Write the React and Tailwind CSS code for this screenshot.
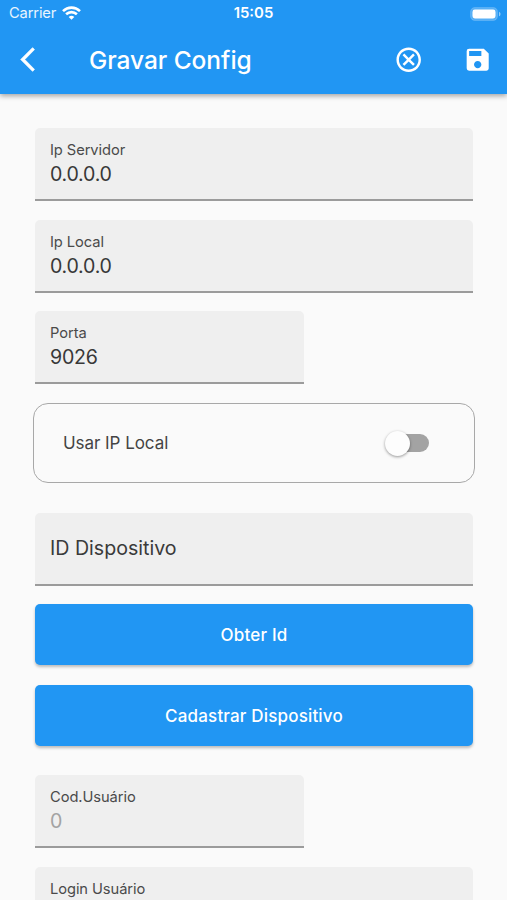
import { MdOutlineCancel, MdSave } from "react-icons/md";

function Label({ children }) {
  return <div className="text-[14.7px] leading-[18px] tracking-[-0.08px] text-[#4a4a4a]">{children}</div>;
}

function Field({ label, value, muted, className = "" }) {
  return (
    <div className={`h-[73px] shrink-0 rounded-t-[5px] border-b-2 border-[#9b9b9b] bg-[#efefef] px-[15px] pt-[13px] ${className}`}>
      <Label>{label}</Label>
      <div className={`mt-[3px] text-[19.6px] leading-6 tracking-[-0.25px] ${muted ? "text-[#a3a3a3]" : "text-[#383838]"}`}>{value}</div>
    </div>
  );
}

function Button({ children, className = "" }) {
  return (
    <button className={`flex h-[61px] w-full shrink-0 items-center justify-center rounded-[5px] bg-[#2196f3] pt-[2px] text-[17px] font-medium tracking-[0.17px] text-white shadow-[0_2px_3px_rgba(0,0,0,0.25)] ${className}`}>
      {children}
    </button>
  );
}

function StatusBar() {
  return (
    <div className="flex h-[27px] items-center pl-[9px] pr-[6px] text-white">
      <div className="flex flex-1 items-center gap-[6px] text-[14.7px] tracking-[-0.15px] text-white/90">
        <span>Carrier</span>
        <svg width="19" height="14" viewBox="0 0 19 14" fill="none" stroke="white" strokeWidth="2.6">
          <path d="M1 5.1C5.9.4 13.1.4 18 5.1" />
          <path d="M4.1 8.3c3.1-2.9 7.7-2.9 10.8 0" />
          <path d="M6.7 10.9c1.7-1.5 3.9-1.5 5.6 0L9.5 13.7z" fill="white" stroke="none" />
        </svg>
      </div>
      <div className="mr-[3px] text-center text-[14.9px] font-semibold">15:05</div>
      <div className="flex flex-1 justify-end">
        <svg width="31" height="14" viewBox="0 0 31 14">
          <rect x="0.5" y="0.5" width="27" height="13" rx="4.2" fill="white" fillOpacity=".25" stroke="white" strokeOpacity=".15" />
          <rect x="2.5" y="2.5" width="23" height="9" rx="2.4" fill="white" />
          <path d="M29 4.7c2 .8 2 3.8 0 4.6z" fill="white" fillOpacity=".5" />
        </svg>
      </div>
    </div>
  );
}

export default function App() {
  return (
    <div className="flex h-[900px] w-[507px] flex-col overflow-hidden bg-[#fafafa] font-['Inter','Liberation_Sans',sans-serif]">
      <header className="z-10 h-[94px] shrink-0 bg-[#2196f3] shadow-[0_2px_5px_rgba(0,0,0,0.35)]">
        <StatusBar />
        <div className="flex h-[65px] items-center pl-[20px] pr-[15px] text-white">
          <svg width="15" height="25" viewBox="-0.4 2 12.3 20" fill="currentColor" stroke="currentColor" strokeWidth="0.6" strokeLinejoin="round">
            <path d="M11.5 3.87 9.9 2.3 0.2 12l9.7 9.7 1.6-1.57L3.54 12z" />
          </svg>
          <h1 className="ml-[54px] pt-px text-[24.5px] font-medium tracking-[-0.05px]">Gravar Config</h1>
          <MdOutlineCancel className="ml-auto size-[29.4px]" />
          <MdSave className="ml-[39px] size-[29.4px]" />
        </div>
      </header>
      <main className="flex flex-col pl-[35px] pr-[34px] pt-[34px]">
        <Field label="Ip Servidor" value="0.0.0.0" />
        <Field label="Ip Local" value="0.0.0.0" className="mt-[19px]" />
        <Field label="Porta" value="9026" className="mt-[18px] w-[269px]" />
        <div className="-mx-[2px] mt-[19px] flex h-[80px] shrink-0 items-center justify-between rounded-[15px] border border-[#a8a8a8] pl-[29px] pr-[45px]">
          <span className="pt-[2px] text-[17px] tracking-[-0.05px] text-[#444]">Usar IP Local</span>
          <div className="flex h-[18px] w-[41px] items-center rounded-full bg-[#a3a3a3]">
            <div className="-ml-[3px] size-[25px] shrink-0 rounded-full bg-[#fdfdfd] shadow-[0_1px_3px_rgba(0,0,0,0.4)]" />
          </div>
        </div>
        <div className="mt-[30px] flex h-[73px] shrink-0 items-center rounded-t-[5px] border-b-2 border-[#9b9b9b] bg-[#efefef] px-[15px] text-[19.6px] text-[#3a3a3a]">
          ID Dispositivo
        </div>
        <Button className="mt-[18px]">Obter Id</Button>
        <Button className="mt-[20px]">Cadastrar Dispositivo</Button>
        <Field label="Cod.Usuário" value="0" muted className="mt-[29px] w-[269px]" />
        <Field label="Login Usuário" value="" className="mt-[19px]" />
      </main>
    </div>
  );
}
